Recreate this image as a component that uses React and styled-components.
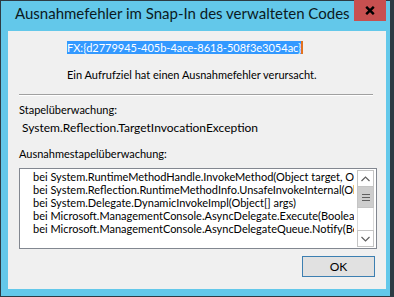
import React from "react";
import styled, { createGlobalStyle } from "styled-components";

const UI_FONT = `Lato, "Noto Sans", sans-serif`;

const Global = createGlobalStyle`
  html, body { margin: 0; padding: 0; background: #ffffff; }
  body { font-family: ${UI_FONT}; }
  #root { width: 394px; height: 297px; }
`;

const Window = styled.div`
  width: 394px;
  height: 297px;
  box-sizing: border-box;
  background: #63c8ea;
  border: 1px solid #2d3b44;
  border-right-width: 4px;
  display: flex;
  flex-direction: column;
  font-family: ${UI_FONT};
  color: #000;
`;

const TitleBar = styled.div`
  height: 30px;
  display: flex;
  align-items: flex-start;
  flex-shrink: 0;
`;

const Title = styled.div`
  font-size: 15px;
  line-height: 20px;
  padding: 2px 0 0 14px;
  white-space: nowrap;
  color: #0b1a22;
`;

const CloseButton = styled.div`
  margin: -1px 4px 0 auto;
  width: 32px;
  height: 21px;
  background: #c75050;
  display: flex;
  align-items: center;
  justify-content: center;
`;

const Client = styled.div`
  flex: 1;
  margin: 0 4px 7px 7px;
  background: #f0f0f0;
  display: flex;
  flex-direction: column;
  font-size: 11px;
  line-height: 15px;
`;

const IdRow = styled.div`
  margin: 10px 0 0 59px;
  height: 13px;
  display: flex;
`;

const Selection = styled.span`
  display: inline-block;
  height: 13px;
  line-height: 13px;
  background: #3399ff;
  color: #ffffff;
  white-space: nowrap;
`;

const Caret = styled.span`
  display: inline-block;
  width: 2px;
  height: 13px;
  background: #e2731f;
`;

const Message = styled.div`
  margin: 13px 0 0 59px;
  white-space: nowrap;
`;

const Separator = styled.div`
  margin: 12px 0 0 11px;
  width: 354px;
  height: 1px;
  background: #a0a0a0;
  border-bottom: 1px solid #ffffff;
`;

const Label = styled.div`
  margin: ${(p) => p.$top}px 0 0 ${(p) => p.$left}px;
  font-size: ${(p) => p.$size || 11}px;
  white-space: nowrap;
`;

const TraceBox = styled.div`
  margin: 7px 0 0 11px;
  width: 358px;
  height: 81px;
  box-sizing: border-box;
  border: 1px solid #828790;
  background: #ffffff;
  display: flex;
  padding: 1px 2px 1px 0;
`;

const TraceText = styled.div`
  flex: 1;
  min-width: 0;
  overflow: hidden;
  margin-right: 3px;
  padding-left: 13px;
  line-height: 13px;
  white-space: nowrap;
`;

const TraceLine = styled.div`
  height: 13px;
`;

const ScrollBar = styled.div`
  width: 17px;
  display: flex;
  flex-direction: column;
  box-sizing: border-box;
  border-left: 1px solid #dadada;
  border-right: 1px solid #dadada;
`;

const ArrowButton = styled.div`
  height: 17px;
  box-sizing: border-box;
  margin: 0 -1px;
  border: 1px solid #c4c4c4;
  background: #ffffff;
  display: flex;
  align-items: center;
  justify-content: center;
`;

const Thumb = styled.div`
  height: 21px;
  margin: 0 -1px;
  background: #cdcdcd;
  border: 1px solid #c4c4c4;
  border-top: none;
  box-sizing: border-box;
  display: flex;
  flex-direction: column;
  align-items: center;
  justify-content: center;
  gap: 2px;
`;

const Grip = styled.div`
  width: 8px;
  height: 1px;
  background: #5f5f5f;
`;

const Track = styled.div`
  flex: 1;
  background: #ffffff;
`;

const ButtonRow = styled.div`
  display: flex;
  justify-content: flex-end;
  margin: 7px 11px 0 0;
`;

const OkButton = styled.div`
  width: 73px;
  height: 21px;
  box-sizing: border-box;
  border: 1px solid #3c7fb1;
  background: #e1e1e1;
  display: flex;
  align-items: center;
  justify-content: center;
  font-size: 12px;
  line-height: 15px;
`;

const Chevron = ({ up }) => (
  <svg width="9" height="6" viewBox="0 0 9 6">
    <path
      d={up ? "M0.5 5 L4.5 1 L8.5 5" : "M0.5 1 L4.5 5 L8.5 1"}
      fill="none"
      stroke="#606060"
      strokeWidth="1.2"
    />
  </svg>
);

const CloseGlyph = () => (
  <svg width="10" height="9" viewBox="0 0 10 9">
    <path d="M1.2 0.8 L8.8 8.2 M8.8 0.8 L1.2 8.2" stroke="#000" strokeWidth="2.4" />
  </svg>
);

const traceLines = [
  "bei System.RuntimeMethodHandle.InvokeMethod(Object target, Object[] arguments, Signature sig, Boolean constructor)",
  "bei System.Reflection.RuntimeMethodInfo.UnsafeInvokeInternal(Object obj, Object[] parameters, Object[] arguments)",
  "bei System.Delegate.DynamicInvokeImpl(Object[] args)",
  "bei Microsoft.ManagementConsole.AsyncDelegate.Execute(Boolean isAsync)",
  "bei Microsoft.ManagementConsole.AsyncDelegateQueue.Notify(BeginInvokeResult result)",
];

export default function App() {
  return (
    <>
      <Global />
      <Window>
        <TitleBar>
          <Title>Ausnahmefehler im Snap-In des verwalteten Codes</Title>
          <CloseButton>
            <CloseGlyph />
          </CloseButton>
        </TitleBar>
        <Client>
          <IdRow>
            <Selection>FX:{"{"}d2779945-405b-4ace-8618-508f3e3054ac{"}"}</Selection>
            <Caret />
          </IdRow>
          <Message>Ein Aufrufziel hat einen Ausnahmefehler verursacht.</Message>
          <Separator />
          <Label $top={6} $left={11}>Stapelüberwachung:</Label>
          <Label $top={3} $left={14} $size={12}>System.Reflection.TargetInvocationException</Label>
          <Label $top={11} $left={11}>Ausnahmestapelüberwachung:</Label>
          <TraceBox>
            <TraceText>
              {traceLines.map((l) => (
                <TraceLine key={l}>{l}</TraceLine>
              ))}
            </TraceText>
            <ScrollBar>
              <ArrowButton>
                <Chevron up />
              </ArrowButton>
              <Thumb>
                <Grip />
                <Grip />
                <Grip />
              </Thumb>
              <Track />
              <ArrowButton>
                <Chevron />
              </ArrowButton>
            </ScrollBar>
          </TraceBox>
          <ButtonRow>
            <OkButton>OK</OkButton>
          </ButtonRow>
        </Client>
      </Window>
    </>
  );
}
